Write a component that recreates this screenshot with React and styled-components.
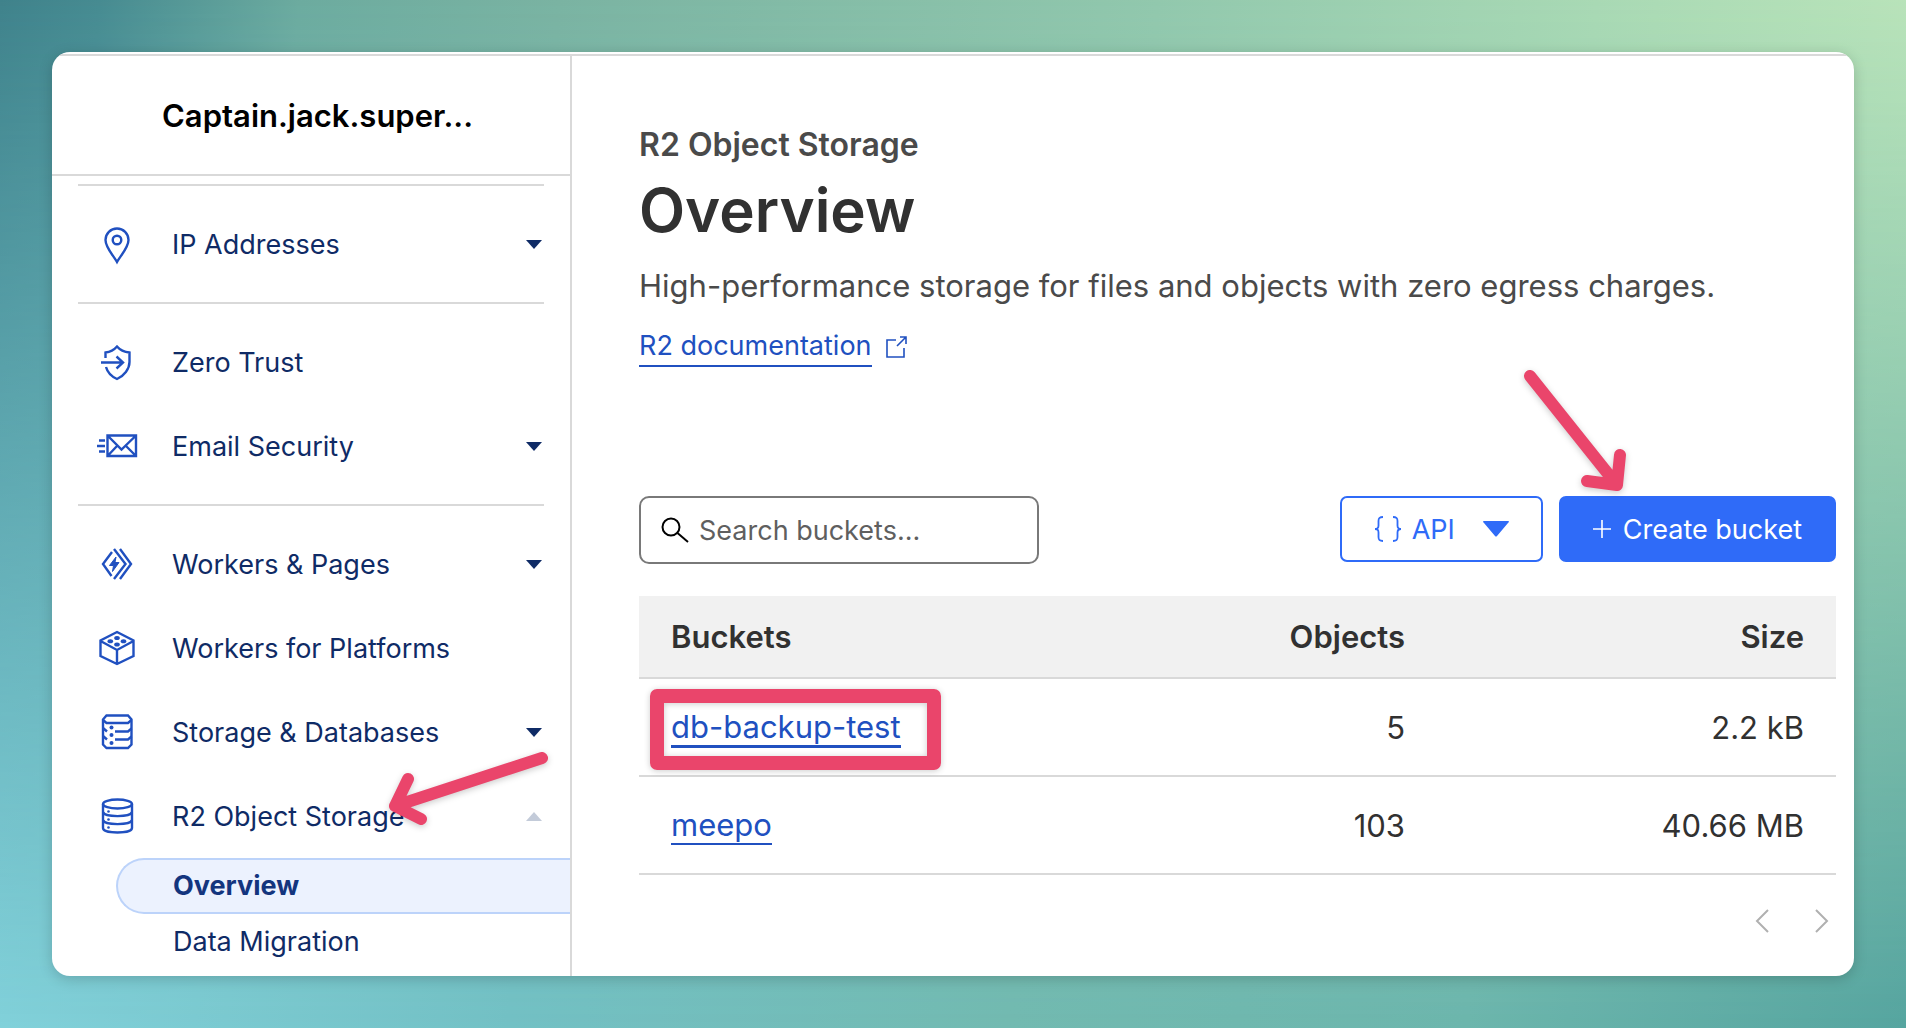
import styled, { createGlobalStyle } from "styled-components"

export default function App() {
    return (
        <Backdrop>
            <GlobalStyle />
            <Window>
                <Sidebar>
                    <AccountName>Captain.jack.super...</AccountName>
                    <nav aria-label="Account">
                        {groups.map((group) => (
                            <NavGroup key={group[0].label}>
                                {group.map((item) => (
                                    <NavItem key={item.label} item={item} />
                                ))}
                            </NavGroup>
                        ))}
                    </nav>
                    <SidebarArrow width="170" height="80" viewBox="0 0 170 80">
                        <path d="M156 8L9 56M22 29L9 56L35 69" />
                    </SidebarArrow>
                </Sidebar>

                <Main>
                    <Kicker>R2 Object Storage</Kicker>
                    <Title>Overview</Title>
                    <Description>High-performance storage for files and objects with zero egress charges.</Description>
                    <DocLine>
                        <Link href="#docs">R2 documentation</Link>
                        <ExternalIcon />
                    </DocLine>

                    <Toolbar>
                        <SearchBox>
                            <SearchIcon />
                            <input type="search" aria-label="Search buckets" placeholder="Search buckets..." />
                        </SearchBox>
                        <Actions>
                            <ApiButton type="button">
                                <BracesIcon />
                                <span>API</span>
                                <svg width="26" height="16" viewBox="0 0 26 16" aria-hidden="true">
                                    <path d="M1 0H25Q27 0 25 2L14 15Q13 16 12 15L1 2Q-1 0 1 0Z" fill="currentColor" />
                                </svg>
                            </ApiButton>
                            <CreateButton type="button">
                                <svg width="18" height="18" viewBox="0 0 18 18" aria-hidden="true">
                                    <path d="M9 0V18M0 9H18" stroke="currentColor" strokeWidth="1.6" />
                                </svg>
                                <span>Create bucket</span>
                            </CreateButton>
                            <ButtonArrow width="110" height="140" viewBox="0 0 110 140">
                                <path d="M10 10L97 119M100 89L97 119L67 115" />
                            </ButtonArrow>
                        </Actions>
                    </Toolbar>

                    <BucketTable>
                        <thead>
                            <tr>
                                <th>Buckets</th>
                                <th>Objects</th>
                                <th>Size</th>
                            </tr>
                        </thead>
                        <tbody>
                            {buckets.map((bucket) => (
                                <tr key={bucket.name}>
                                    <td>
                                        <BucketName>
                                            <Link href={"#" + bucket.name} $thick={bucket.marked}>{bucket.name}</Link>
                                            {bucket.marked && <Highlight />}
                                        </BucketName>
                                    </td>
                                    <td>{bucket.objects}</td>
                                    <td>{bucket.size}</td>
                                </tr>
                            ))}
                        </tbody>
                    </BucketTable>

                    <Pager>
                        <button type="button" aria-label="Previous page">
                            <svg width="14" height="24" viewBox="0 0 14 24"><path d="M13 1L2 12L13 23" /></svg>
                        </button>
                        <button type="button" aria-label="Next page">
                            <svg width="14" height="24" viewBox="0 0 14 24"><path d="M1 1L12 12L1 23" /></svg>
                        </button>
                    </Pager>
                </Main>
            </Window>
        </Backdrop>
    )
}

function NavItem({ item }) {
    const Icon = item.icon
    return (
        <>
            <NavButton type="button" aria-expanded={item.caret ? item.caret === "up" : undefined}>
                <IconSlot><Icon /></IconSlot>
                <span className="label">{item.label}</span>
                {item.caret && (
                    <Caret $up={item.caret === "up"} width="16" height="9" viewBox="0 0 16 9" aria-hidden="true">
                        <path d="M0 0H16L8 9Z" />
                    </Caret>
                )}
            </NavButton>
            {item.children && item.children.map((child) => (
                <SubLink key={child.label} href="#r2" $active={child.active}>{child.label}</SubLink>
            ))}
        </>
    )
}

/* icons */

const PinIcon = () => (
    <StrokeIcon width="40" height="40" viewBox="0 0 40 40">
        <path d="M20 38C16 31 8.500 23.500 8.500 16A11.500 11.500 0 0 1 31.500 16C31.500 23.500 24 31 20 38Z" />
        <circle cx="20" cy="16" r="4.300" />
    </StrokeIcon>
)

const ShieldIcon = () => (
    <StrokeIcon width="40" height="40" viewBox="0 0 40 40">
        <path d="M8.500 16V10.500C13 10 17 8 20 4.500C23 8 27.500 10 32.500 10.500V20C32.500 27 27 34 20 37C14.500 34.500 10.500 30.500 9 25" />
        <path d="M4 20.500H26M19.500 14.500L26 20.500L19.500 26.500" />
    </StrokeIcon>
)

const MailIcon = () => (
    <StrokeIcon width="40" height="40" viewBox="0 0 40 40">
        <path d="M10.500 9.500H39V30H10.500ZM11 10L24.500 23.500L38.500 10M11 29.500L20 20M38.500 29.500L29 20" />
        <path d="M2 14.500H8M0 20H8M2 25.500H8" />
    </StrokeIcon>
)

const WorkersIcon = () => (
    <StrokeIcon width="40" height="40" viewBox="0 0 40 40">
        <path d="M15 8L6 20L14.500 32M17 5L28.500 20L17 35M23 5L34 20L23 35" />
        <path d="M19 13L12.500 21.500H16.500L15.500 27.500L22 18.500H18Z" fill="currentColor" strokeWidth="1" />
    </StrokeIcon>
)

const BrickIcon = () => (
    <StrokeIcon width="40" height="40" viewBox="0 0 40 40">
        <path d="M20 4L36.500 12.500V28L20 36L3.500 28V12.500ZM3.500 13L20 22L36.500 13M20 22V36" />
        <g fill="currentColor" stroke="none">
            <ellipse cx="20" cy="10" rx="2.800" ry="2" />
            <ellipse cx="13.300" cy="13.200" rx="2.800" ry="2" />
            <ellipse cx="26.500" cy="13.200" rx="2.800" ry="2" />
            <ellipse cx="20" cy="16.500" rx="2.800" ry="2" />
        </g>
    </StrokeIcon>
)

const StorageIcon = () => (
    <StrokeIcon width="40" height="40" viewBox="0 0 40 40">
        <path d="M6 7.500L9.500 3.500H31L34.500 7.500V32.500L31 36H9.500L6 32.500Z" />
        <path d="M6 8L9.500 11H31L34.500 8M18 19.500H31L34.500 16.500M18 27.500H31L34.500 24.500M6 16L10 19.500M6 24L10 27.500" />
        <g fill="currentColor" stroke="none">
            <circle cx="14.500" cy="15.500" r="2" />
            <circle cx="14.500" cy="23" r="2" />
            <circle cx="14.500" cy="31" r="2" />
        </g>
    </StrokeIcon>
)

const DatabaseIcon = () => (
    <StrokeIcon width="40" height="40" viewBox="0 0 40 40">
        <ellipse cx="20.500" cy="8" rx="14.500" ry="4.500" />
        <path d="M6 8V32C6 38 35 38 35 32V8M6 16C8 21.500 33 21.500 35 16M6 24C8 29.500 33 29.500 35 24" />
        <g fill="currentColor" stroke="none">
            <circle cx="11.500" cy="15.500" r="1.300" />
            <circle cx="11.500" cy="23.500" r="1.300" />
            <circle cx="11.500" cy="31.500" r="1.300" />
        </g>
    </StrokeIcon>
)

const ExternalIcon = () => (
    <svg width="21" height="22" viewBox="0 0 21 22" fill="none" stroke="#2050c0" strokeWidth="1.6" aria-hidden="true">
        <path d="M10 4H1V21H18V12M11 10L20 1M14 1H20V8" />
    </svg>
)

const SearchIcon = () => (
    <svg width="28" height="26" viewBox="0 0 28 26" fill="none" stroke="#000" strokeWidth="2" aria-hidden="true">
        <circle cx="10" cy="10" r="8.500" />
        <path d="M16.500 16L27 25" />
    </svg>
)

const BracesIcon = () => (
    <svg width="28" height="26" viewBox="0 0 28 26" fill="none" stroke="currentColor" strokeWidth="1.8" aria-hidden="true">
        <path d="M9 1C5 1 4.500 2.500 4.500 5V9.500C4.500 12 3.500 13 1 13C3.500 13 4.500 14 4.500 16.500V21C4.500 23.500 5 25 9 25" />
        <path d="M19 1C23 1 23.500 2.500 23.500 5V9.500C23.500 12 24.500 13 27 13C24.500 13 23.500 14 23.500 16.500V21C23.500 23.500 23 25 19 25" />
    </svg>
)

const groups = [
    [{ label: "IP Addresses", icon: PinIcon, caret: "down" }],
    [
        { label: "Zero Trust", icon: ShieldIcon },
        { label: "Email Security", icon: MailIcon, caret: "down" },
    ],
    [
        { label: "Workers & Pages", icon: WorkersIcon, caret: "down" },
        { label: "Workers for Platforms", icon: BrickIcon },
        { label: "Storage & Databases", icon: StorageIcon, caret: "down" },
        {
            label: "R2 Object Storage",
            icon: DatabaseIcon,
            caret: "up",
            children: [{ label: "Overview", active: true }, { label: "Data Migration" }],
        },
    ],
]

const buckets = [
    { name: "db-backup-test", objects: "5", size: "2.2 kB", marked: true },
    { name: "meepo", objects: "103", size: "40.66 MB" },
]

const GlobalStyle = createGlobalStyle`
    * {
        box-sizing: border-box;
    }
    body {
        margin: 0;
        font-family: Inter, "Liberation Sans", sans-serif;
        color: #313131;
    }
    button, input {
        font: inherit;
    }
    button {
        cursor: pointer;
    }
`

const Backdrop = styled.div`
    position: relative;
    display: flex;
    min-height: 100vh;
    padding: 52px;
    background: linear-gradient(95deg, #84d4de 0%, #73c1c5 30%, #72bab1 55%, #6cb6ad 78%, #56a5a0 100%);

    /* top colours, fading out towards the bottom */
    &::before {
        content: "";
        position: absolute;
        inset: 0;
        background: linear-gradient(95deg, #3f828b 0%, #468b91 5%, #6cab9f 15%, #7ab3a2 28%, #92c8ad 58%, #a9d9b4 80%, #bde6bb 100%);
        mask-image: linear-gradient(#000, transparent);
    }
`

const Window = styled.div`
    position: relative;
    flex: 1;
    display: flex;
    overflow: hidden;
    padding-top: 2px;
    border-radius: 18px;
    background: #fff;
    box-shadow: 0 3px 14px rgba(0, 0, 0, 0.18);
`

const Sidebar = styled.aside`
    position: relative;
    width: 520px;
    flex-shrink: 0;
    border-top: 2px solid #d9d9d9;
    border-right: 2px solid #d9d9d9;
`

const AccountName = styled.div`
    height: 120px;
    padding-left: 110px;
    margin-bottom: 8px;
    border-bottom: 2px solid #d9d9d9;
    font-size: 31px;
    font-weight: 600;
    line-height: 120px;
    color: #000;
`

const NavGroup = styled.div`
    padding: 16px 0;

    &::before {
        content: "";
        display: block;
        height: 2px;
        margin: -16px 26px 16px;
        background: #d9d9d9;
    }
    &:last-child {
        padding-bottom: 0;
    }
`

const NavButton = styled.button`
    display: flex;
    align-items: center;
    width: 100%;
    height: 84px;
    padding: 0 28px 0 45px;
    border: none;
    background: none;
    color: #0f2b66;
    font-size: 27px;
    text-align: left;

    .label {
        flex: 1;
    }
`

const IconSlot = styled.span`
    display: flex;
    width: 75px;
    color: #2050c0;
`

const StrokeIcon = styled.svg.attrs({ "aria-hidden": true })`
    overflow: visible;
    fill: none;
    stroke: currentColor;
    stroke-width: 2.4;
`

const Caret = styled.svg`
    fill: ${(props) => (props.$up ? "#c3cbd9" : "#0f2b66")};
    transform: ${(props) => (props.$up ? "rotate(180deg)" : "none")};
`

const SubLink = styled.a`
    display: block;
    height: 56px;
    margin-left: 64px;
    padding-left: 55px;
    border: 2px solid ${(props) => (props.$active ? "#bcd3fa" : "transparent")};
    border-right: none;
    border-radius: 28px 0 0 28px;
    background: ${(props) => (props.$active ? "#ecf2fe" : "none")};
    color: ${(props) => (props.$active ? "#13357e" : "#0f2b66")};
    font-size: 27px;
    font-weight: ${(props) => (props.$active ? 700 : 400)};
    line-height: 52px;
    text-decoration: none;
`

const Main = styled.main`
    flex: 1;
    padding: 64px 18px 0 67px;
    border-top: 2px solid #d9d9d9;
`

const Kicker = styled.div`
    font-size: 32px;
    font-weight: 600;
    line-height: 50px;
    color: #4a4a4a;
`

const Title = styled.h1`
    margin: 0;
    font-size: 60px;
    font-weight: 600;
    line-height: 80px;
`

const Description = styled.p`
    margin: 11px 0 0;
    font-size: 31px;
    line-height: 50px;
    color: #4a4a4a;
`

const DocLine = styled.div`
    display: flex;
    align-items: center;
    gap: 14px;
    margin-top: 16px;
    font-size: 27px;
`

const Link = styled.a`
    border-bottom: ${(props) => (props.$thick ? 3 : 2)}px solid #2050c0;
    color: #2050c0;
    line-height: 38px;
    text-decoration: none;
`

const Toolbar = styled.div`
    display: flex;
    justify-content: space-between;
    align-items: flex-start;
    margin-top: 129px;
    font-size: 27px;
`

const SearchBox = styled.label`
    display: flex;
    align-items: center;
    gap: 10px;
    width: 400px;
    height: 68px;
    padding: 0 20px;
    border: 2px solid #797979;
    border-radius: 10px;

    input {
        flex: 1;
        min-width: 0;
        border: none;
        outline: none;
        padding: 0;
        background: none;
    }
    input::placeholder {
        color: #5f5f5f;
        opacity: 1;
    }
`

const Actions = styled.div`
    position: relative;
    display: flex;
    gap: 16px;
`

const ActionButton = styled.button`
    display: flex;
    align-items: center;
    height: 66px;
    padding: 0 32px;
    border: 2px solid #2f6bf8;
    border-radius: 7px;
    font-size: 27px;
`

const ApiButton = styled(ActionButton)`
    gap: 10px;
    background: #fff;
    color: #2f6bf8;

    svg:last-child {
        margin-left: 18px;
    }
`

const CreateButton = styled(ActionButton)`
    gap: 12px;
    background: #2f6bf8;
    color: #fff;
`

const BucketTable = styled.table`
    width: 100%;
    margin-top: 32px;
    border-collapse: collapse;
    table-layout: fixed;
    font-size: 31px;

    th, td {
        padding: 0 32px;
        border-bottom: 2px solid #d9d9d9;
        text-align: right;
    }
    th {
        height: 82px;
        background: #f1f1f1;
        font-weight: 600;
    }
    td {
        height: 98px;
    }
    th:first-child, td:first-child {
        text-align: left;
    }
`

const BucketName = styled.span`
    position: relative;
    display: inline-block;
`

const Highlight = styled.span`
    position: absolute;
    inset: -19px -40px -24px -21px;
    border: 14px solid #ea456b;
    border-radius: 7px;
    box-shadow: 0 1px 6px rgba(0, 0, 0, 0.2), inset 0 1px 6px rgba(0, 0, 0, 0.2);
`

const Arrow = styled.svg.attrs({ "aria-hidden": true })`
    position: absolute;
    fill: none;
    stroke: #ea456b;
    stroke-width: 12;
    stroke-linecap: round;
    stroke-linejoin: round;
    filter: drop-shadow(0 2px 3px rgba(0, 0, 0, 0.2));
    pointer-events: none;
`

const SidebarArrow = styled(Arrow)`
    left: 334px;
    top: 694px;
`

const ButtonArrow = styled(Arrow)`
    right: 206px;
    top: -130px;
`

const Pager = styled.div`
    display: flex;
    justify-content: flex-end;
    gap: 46px;
    margin-top: 34px;
    padding-right: 7px;

    button {
        display: flex;
        padding: 0;
        border: none;
        background: none;
    }
    path {
        fill: none;
        stroke: #b0b0b0;
        stroke-width: 2;
    }
`
